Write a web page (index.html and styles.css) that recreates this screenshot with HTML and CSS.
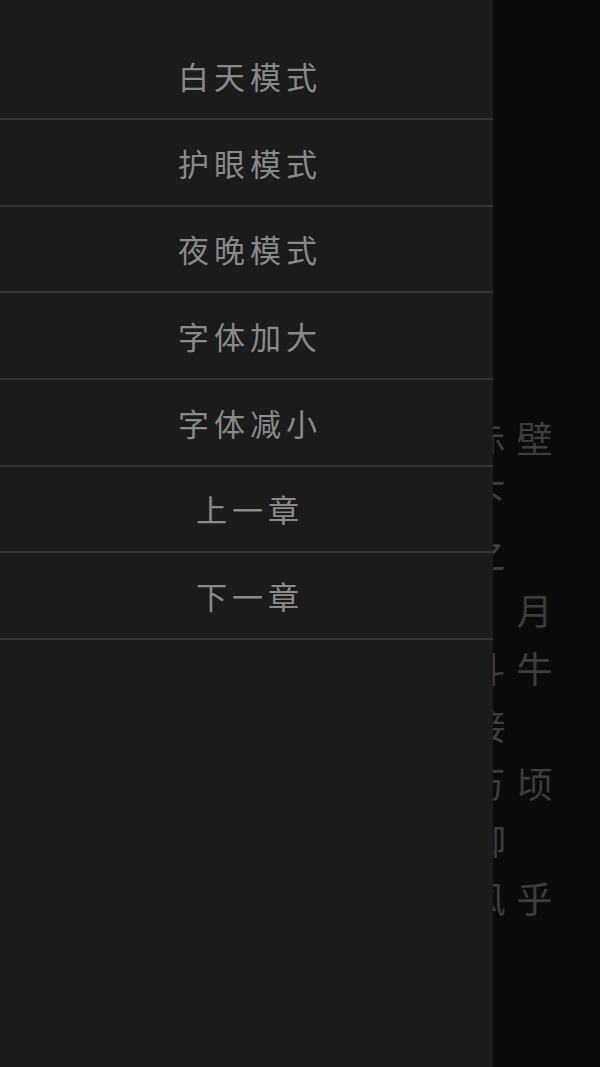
FILE: index.html
```html
<!DOCTYPE html>
<html lang="zh">
<head>
<meta charset="utf-8">
<title>阅读</title>
<link rel="stylesheet" href="styles.css">
</head>
<body>
<div class="reader">
  <div class="row"><span>赤</span><span>壁</span></div>
  <div class="row"><span>下</span><span></span></div>
  <div class="row"><span>之</span><span></span></div>
  <div class="row"><span></span><span>月</span></div>
  <div class="row"><span>斗</span><span>牛</span></div>
  <div class="row"><span>接</span><span></span></div>
  <div class="row"><span>万</span><span>顷</span></div>
  <div class="row"><span>御</span><span></span></div>
  <div class="row"><span>风</span><span>乎</span></div>
</div>
<nav class="drawer">
  <ul class="menu">
    <li class="item">白天模式</li>
    <li class="item">护眼模式</li>
    <li class="item">夜晚模式</li>
    <li class="item">字体加大</li>
    <li class="item">字体减小</li>
    <li class="item">上一章</li>
    <li class="item">下一章</li>
  </ul>
</nav>
</body>
</html>
```
FILE: styles.css
```css
html, body {
  margin: 0;
  padding: 0;
}
body {
  width: 600px;
  height: 1067px;
  background: #0b0b0b;
  position: relative;
  overflow: hidden;
  font-family: "Noto Sans CJK SC", "Noto Sans", sans-serif;
}
.reader {
  padding-top: 408px;
  padding-right: 42px;
  display: flex;
  flex-direction: column;
  align-items: flex-end;
}
.row {
  display: grid;
  grid-template-columns: 47px 47px;
  height: 57.5px;
  align-items: center;
}
.row span {
  font-size: 36px;
  line-height: 1;
  color: #3d3d3d;
  text-align: center;
}
.drawer {
  position: absolute;
  top: 0;
  left: 0;
  width: 493px;
  height: 100%;
  background: #1b1b1b;
}
.menu {
  list-style: none;
  margin: 0;
  padding: 33.3px 0 0 0;
}
.item {
  height: 84.67px;
  border-bottom: 2px solid #333333;
  display: flex;
  align-items: center;
  justify-content: center;
  font-size: 31px;
  letter-spacing: 5px;
  padding-left: 7px;
  color: #8a8a8a;
}
```
